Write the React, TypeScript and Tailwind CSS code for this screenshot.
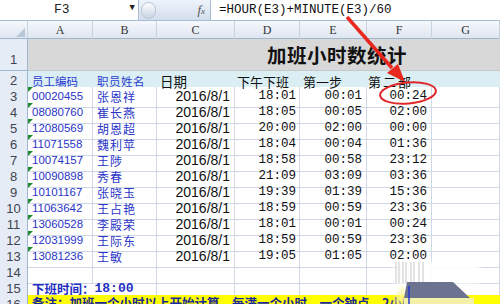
import React from 'react';

const cols = 'grid grid-cols-[28px_65px_64px_78px_65px_67px_65px_68px]';
const cjk = "font-['Noto_Sans_CJK_SC',sans-serif]";
const mono = "font-['Liberation_Mono','Noto_Sans_CJK_SC',monospace]";
const sans = "font-['Liberation_Sans','Noto_Sans_CJK_SC',sans-serif]";

const data = [
  ['00020455', '张恩祥', '18:01', '00:01', '00:24'],
  ['08080760', '崔长燕', '18:05', '00:05', '02:00'],
  ['12080569', '胡恩超', '20:00', '02:00', '00:00'],
  ['11071558', '魏利苹', '18:04', '00:04', '01:36'],
  ['10074157', '王陟', '18:58', '00:58', '23:12'],
  ['10090898', '秀春', '21:09', '03:09', '03:36'],
  ['10101167', '张晓玉', '19:39', '01:39', '15:36'],
  ['11063642', '王占艳', '18:59', '00:59', '23:36'],
  ['13060528', '李殿荣', '18:01', '00:01', '00:24'],
  ['12031999', '王际东', '18:59', '00:59', '23:36'],
  ['13081236', '王敏', '19:05', '01:05', '02:00'],
];

const RowHead = ({ n, tall }: { n: number; tall?: boolean }) => (
  <div
    className={`flex justify-center ${tall ? 'items-end pb-[1px]' : 'items-center'} bg-[#e6ecf5] border-r border-b border-[#9eb6ce] text-[13px] text-[#3e4450] ${sans}`}
  >
    {n}
  </div>
);

const cell = 'border-r border-b border-[#d0d7e5] flex items-center overflow-hidden whitespace-nowrap';

export default function App() {
  return (
    <div className="relative w-[500px] h-[304px] overflow-hidden bg-white">
      {/* formula bar */}
      <div className="flex h-[21px] bg-[#d5e0ee] border-b border-[#a9bcd5]">
        <div className={`relative w-[139px] bg-white border-r border-[#a9bcd5] flex items-center pl-[54px] text-[13px] text-[#222] ${mono}`}>
          F3
          <span className="absolute right-[3px] top-[2px] text-[9px] text-[#222]">▼</span>
        </div>
        <div className="relative w-[71px] flex items-center bg-gradient-to-b from-[#eef3fa] to-[#d3deec]">
          <div className="ml-[2px] w-[15px] h-[17px] rounded-full border border-[#b6c4d6] bg-gradient-to-b from-white to-[#c8d3e1]" />
          <span className="ml-auto mr-[5px] italic text-[13px] text-[#555] font-['Liberation_Serif',serif]">
            f<span className="text-[9px]">x</span>
          </span>
        </div>
        <div className={`flex-1 bg-white border-l border-[#a9bcd5] flex items-center pl-[8px] text-[12.5px] text-[#111] ${mono}`}>
          =HOUR(E3)+MINUTE(E3)/60
        </div>
      </div>

      {/* column headers */}
      <div className={`${cols} h-[18px] bg-gradient-to-b from-[#f5f8fc] to-[#dfe6f0] border-b border-[#9eb6ce]`}>
        <div className="relative border-r border-[#c5d3e3]">
          <div className="absolute right-[2px] bottom-[2px] w-0 h-0 border-l-[9px] border-l-transparent border-b-[9px] border-b-[#b9c6d6]" />
        </div>
        {['A', 'B', 'C', 'D', 'E', 'F', 'G'].map((c) => (
          <div
            key={c}
            className="flex items-center justify-center border-r border-[#c5d3e3] text-[12px] text-[#333] font-['Liberation_Serif',serif]"
          >
            {c}
          </div>
        ))}
      </div>

      {/* row 1 : title */}
      <div className={`${cols} h-[32px]`}>
        <RowHead n={1} tall />
        <div className="col-span-7 bg-[#d8d8d8] border-b border-[#c8c8c8] flex items-center pl-[239px]">
          <span className={`text-[19.5px] font-bold text-[#111] tracking-[0.5px] ${cjk}`}>加班小时数统计</span>
        </div>
      </div>

      {/* row 2 : headers */}
      <div className={`${cols} h-[16px] bg-[#daeef3]`}>
        <RowHead n={2} />
        <div className={`flex items-center pl-[4px] text-[11.5px] text-[#2a3bd0] ${cjk}`}>员工编码</div>
        <div className={`flex items-center pl-[4px] text-[11.5px] text-[#2a3bd0] tracking-[0.5px] ${cjk}`}>职员姓名</div>
        <div className={`flex items-center pl-[3px] text-[13.5px] text-[#111] ${cjk}`}>日期</div>
        <div className={`flex items-center pl-[2px] text-[13px] text-[#111] ${cjk}`}>下午下班</div>
        <div className={`flex items-center pl-[3px] text-[13px] text-[#111] ${cjk}`}>第一步</div>
        <div className={`flex items-center pl-[1px] text-[13px] text-[#111] tracking-[2px] ${cjk}`}>第二部</div>
        <div />
      </div>

      {/* data rows */}
      {data.map((r, i) => (
        <div key={r[0]} className={`${cols} h-[16px]`}>
          <RowHead n={i + 3} />
          <div className={`${cell} relative pl-[4px] text-[11.5px] text-[#2a35c8] ${sans}`}>
            <div className="absolute left-0 top-0 w-0 h-0 border-r-[5px] border-r-transparent border-t-[5px] border-t-[#1a8a2a]" />
            {r[0]}
          </div>
          <div className={`${cell} pl-[4px] text-[12px] text-[#2a35c8] tracking-[1px] ${cjk}`}>{r[1]}</div>
          <div className={`${cell} justify-end pr-[4px] text-[14px] text-[#111] ${sans}`}>2016/8/1</div>
          <div className={`${cell} justify-end pr-[3px] text-[12.5px] text-[#111] ${mono}`}>{r[2]}</div>
          <div className={`${cell} justify-end pr-[4px] text-[12.5px] text-[#111] ${mono}`}>{r[3]}</div>
          <div className={`${cell} justify-end pr-[4px] text-[12.5px] text-[#111] ${mono}`}>{r[4]}</div>
          <div className={cell} />
        </div>
      ))}

      {/* row 14 */}
      <div className={`${cols} h-[16px]`}>
        <RowHead n={14} />
        {[0, 1, 2, 3, 4, 5, 6].map((k) => (
          <div key={k} className={cell} />
        ))}
      </div>

      {/* row 15 */}
      <div className={`${cols} h-[16px]`}>
        <RowHead n={15} />
        <div className={`col-span-2 border-b border-r border-[#d0d7e5] flex items-center pl-[4px] text-[12.5px] leading-none font-bold text-[#1f2fc0] ${cjk}`}>
          下班时间：<span className={`${mono} text-[13px]`}>18:00</span>
        </div>
        {[0, 1, 2, 3, 4].map((k) => (
          <div key={k} className={cell} />
        ))}
      </div>

      {/* row 16 */}
      <div className={`${cols} h-[16px]`}>
        <RowHead n={16} />
        <div className={`col-span-7 bg-[#ffff00] flex items-start pt-[1px] pl-[4px] whitespace-nowrap overflow-hidden text-[12.5px] leading-[14px] font-bold text-[#1a2a9a] ${cjk}`}>
          备注：加班一个小时以上开始计算，每满一个小时，一个钟点，2小时以上
        </div>
      </div>

      {/* annotations */}
      <svg className="absolute inset-0 pointer-events-none" width="500" height="304" viewBox="0 0 500 304">
        <defs>
          <filter id="blur" x="-20%" y="-20%" width="140%" height="140%">
            <feGaussianBlur stdDeviation="2" />
          </filter>
        </defs>
        <line x1="347" y1="17" x2="392" y2="68" stroke="#e8281e" strokeWidth="3.5" />
        <polygon points="405,82 398,64 387,73" fill="#e8281e" />
        <ellipse cx="408" cy="93" rx="28" ry="10.5" transform="rotate(-5 408 93)" fill="none" stroke="#e0262a" strokeWidth="2" />
        <rect x="394" y="262" width="86" height="22" fill="#ffffff" opacity="0.9" filter="url(#blur)" />
        {[396, 399, 403, 406, 411, 414, 419, 423].map((x) => (
          <line key={x} x1={x} y1="262" x2={x} y2="283" stroke="#9a9a9a" strokeWidth="1" opacity="0.55" />
        ))}
        <polygon points="392,304 402,286 410,300 404,304" fill="#fbf59a" opacity="0.8" filter="url(#blur)" />
        <polygon points="407,282 453,282 470,298 404,298" fill="#6c7390" />
        <rect x="404" y="298" width="70" height="6" fill="#f3f0a8" />
        <line x1="409" y1="286" x2="409" y2="304" stroke="#2a3bd0" strokeWidth="1.5" />
      </svg>
    </div>
  );
}
